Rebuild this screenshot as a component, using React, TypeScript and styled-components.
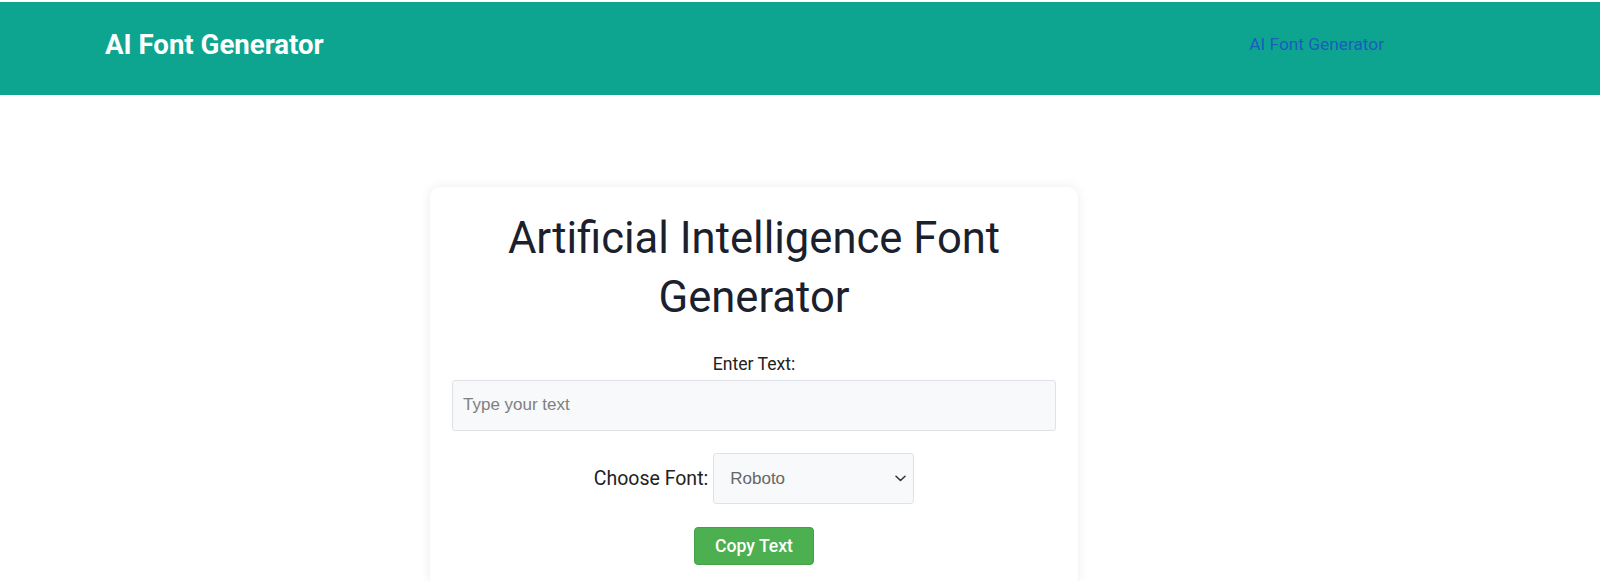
import React from "react";
import styled, { createGlobalStyle } from "styled-components";

const GlobalStyle = createGlobalStyle`
  html, body { margin: 0; padding: 0; background: #ffffff; }
  body {
    padding-top: 2px;
    font-family: Roboto, "Noto Sans", Arial, sans-serif;
    color: #222222;
  }
  * { box-sizing: border-box; }
`;

const Header = styled.header`
  height: 93px;
  background: #0ea590;
  display: flex;
  align-items: center;
  justify-content: space-between;
  padding: 0 216px 9px 105px;
`;

const Logo = styled.h1`
  margin: 0;
  font-size: 27.6px;
  font-weight: 700;
  color: #ffffff;
  line-height: normal;
`;

const NavLink = styled.a`
  font-size: 17.3px;
  color: #1a5dbf;
  text-decoration: none;
`;

const Main = styled.main`
  padding: 92px 0 0 430px;
`;

const Card = styled.section`
  width: 648px;
  padding: 22px;
  background: #ffffff;
  border-radius: 10px;
  box-shadow: 0 0 12px rgba(0, 0, 0, 0.08);
  display: flex;
  flex-direction: column;
`;

const Title = styled.h2`
  margin: 0 0 27px;
  font-size: 43.6px;
  font-weight: 400;
  line-height: 59px;
  text-align: center;
  color: #1a202c;
`;

const FieldLabel = styled.label`
  display: block;
  text-align: center;
  font-size: 17.6px;
  line-height: 20.6px;
  margin-bottom: 5px;
  color: #222222;
`;

const TextInput = styled.input`
  width: 100%;
  height: 51px;
  padding: 0 10px;
  background: #f7f9fa;
  border: 1px solid #dfe3e8;
  border-radius: 3px;
  font-family: "Liberation Sans", Arial, sans-serif;
  font-size: 17px;
  color: #333333;
  outline: none;
  &::placeholder { color: #808080; }
`;

const SelectRow = styled.div`
  margin-top: 22px;
  display: flex;
  justify-content: center;
  align-items: center;
  gap: 5px;
`;

const RowLabel = styled.label`
  font-size: 19.5px;
  color: #222222;
`;

const SelectWrap = styled.div`
  position: relative;
  width: 201px;
  height: 51px;
`;

const FontSelect = styled.select`
  appearance: none;
  -webkit-appearance: none;
  width: 100%;
  height: 100%;
  padding: 0 0 0 16px;
  background: #f7f9fa;
  border: 1px solid #dfe3e8;
  border-radius: 3px;
  font-family: "Liberation Sans", Arial, sans-serif;
  font-size: 17px;
  color: #666666;
  outline: none;
`;

const Chevron = styled.svg`
  position: absolute;
  right: 8px;
  top: 22px;
  width: 11px;
  height: 7px;
  pointer-events: none;
`;

const CopyButton = styled.button`
  margin: 23px auto 0;
  height: 38px;
  width: 120px;
  padding: 0;
  background: #4caf50;
  border: 1px solid #43a047;
  border-radius: 4px;
  color: #ffffff;
  font-family: Roboto, Arial, sans-serif;
  font-size: 17.6px;
  font-weight: 500;
  cursor: pointer;
`;

export default function App() {
  return (
    <>
      <GlobalStyle />
      <Header>
        <Logo>AI Font Generator</Logo>
        <NavLink href="#">AI Font Generator</NavLink>
      </Header>
      <Main>
        <Card>
          <Title>Artificial Intelligence Font Generator</Title>
          <FieldLabel htmlFor="txt">Enter Text:</FieldLabel>
          <TextInput id="txt" type="text" placeholder="Type your text" />
          <SelectRow>
            <RowLabel htmlFor="font">Choose Font:</RowLabel>
            <SelectWrap>
              <FontSelect id="font" defaultValue="Roboto">
                <option value="Roboto">Roboto</option>
                <option value="Lato">Lato</option>
                <option value="Open Sans">Open Sans</option>
                <option value="Inter">Inter</option>
              </FontSelect>
              <Chevron viewBox="0 0 11 7">
                <path d="M1 1.2 L5.5 5.5 L10 1.2" fill="none" stroke="#333" strokeWidth="1.5" strokeLinecap="round" strokeLinejoin="round" />
              </Chevron>
            </SelectWrap>
          </SelectRow>
          <CopyButton>Copy Text</CopyButton>
        </Card>
      </Main>
    </>
  );
}
